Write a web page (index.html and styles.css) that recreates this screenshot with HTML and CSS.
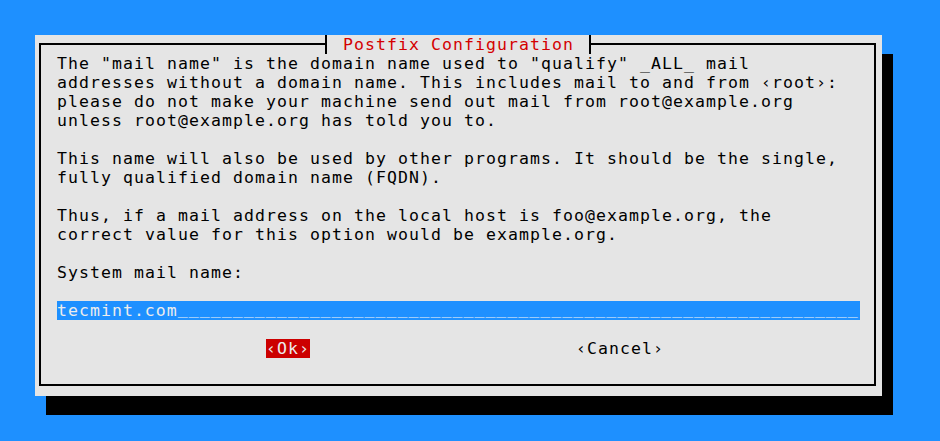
FILE: index.html
```html
<!DOCTYPE html>
<html>
<head>
<meta charset="utf-8">
<link rel="stylesheet" href="styles.css">
</head>
<body>
<div class="screen">
  <div class="dialog">
    <div class="title">Postfix Configuration</div>
    <div class="frame">
      <div class="text">The "mail name" is the domain name used to "qualify" _ALL_ mail
addresses without a domain name. This includes mail to and from ‹root›:
please do not make your machine send out mail from root@example.org
unless root@example.org has told you to.

This name will also be used by other programs. It should be the single,
fully qualified domain name (FQDN).

Thus, if a mail address on the local host is foo@example.org, the
correct value for this option would be example.org.

System mail name:
</div>
      <div class="field"><span class="value">tecmint.com</span><span class="fill">______________________________________________________________</span></div>
      <div class="buttons">
        <span class="btn btn-active">‹Ok›</span>
        <span class="btn">‹Cancel›</span>
      </div>
    </div>
  </div>
</div>
</body>
</html>
```
FILE: styles.css
```css
html, body {
  margin: 0;
  padding: 0;
  background: #1e90ff;
}
.screen {
  padding: 35px 0 0 35px;
  width: 940px;
  height: 441px;
  box-sizing: border-box;
  overflow: hidden;
}
.dialog {
  position: relative;
  width: 847px;
  height: 361px;
  background: #e5e5e5;
  box-shadow: 11px 19px 0 0 #000;
  box-sizing: border-box;
  padding: 8px 6px 10px 4px;
  font-family: "DejaVu Sans Mono", monospace;
  font-size: 16.5px;
  line-height: 19px;
  letter-spacing: 1.067px;
  color: #000;
}
.frame {
  height: 343px;
  box-sizing: border-box;
  border: 2px solid #000;
  padding: 9px 0 7px 16px;
  display: flex;
  flex-direction: column;
}
.title {
  position: absolute;
  left: 290px;
  top: 0;
  width: 266px;
  height: 19px;
  box-sizing: border-box;
  border-left: 2px solid #000;
  border-right: 2px solid #000;
  background: #e5e5e5;
  padding-left: 16px;
  color: #d40000;
  white-space: pre;
}
.text {
  white-space: pre;
  height: 247px;
}
.field {
  display: flex;
  align-items: flex-start;
  width: 803px;
  height: 19px;
  flex-shrink: 0;
  background: #1e90ff;
  color: #ececec;
  white-space: pre;
  letter-spacing: 1.05px;
}
.value {
  flex-shrink: 0;
}
.fill {
  flex-shrink: 0;
  margin-top: -2px;
  color: #f4f4f4;
}
.buttons {
  display: flex;
  gap: 266px;
  margin-top: 19px;
  padding-left: 209px;
}
.btn {
  height: 19px;
  white-space: pre;
}
.btn-active {
  background: #cc0000;
  color: #ececec;
  width: 44px;
}
```
